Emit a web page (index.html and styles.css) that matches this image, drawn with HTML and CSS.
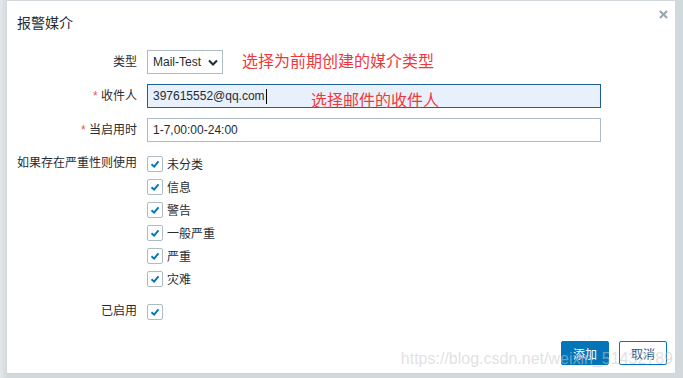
FILE: index.html
```html
<!DOCTYPE html>
<html lang="zh-CN">
<head>
  <meta charset="UTF-8" />
  <meta name="viewport" content="width=device-width, initial-scale=1.0"/>
  <title>报警媒介</title>
  <link rel="stylesheet" href="styles.css">
</head>
<body>
  <div id="dialog">
    <div id="header">
      <h4>报警媒介</h4>
      <svg class="close" viewBox="0 0 10 10"><path d="M1 1L9 9M9 1L1 9"/></svg>
    </div>
    <div id="form">
      <div class="row">
        <label>类型</label>
        <div class="field">
          <div class="select">Mail-Test <svg viewBox="0 0 10 6"><path d="M1 1L5 5L9 1"/></svg></div>
          <span class="note">选择为前期创建的媒介类型</span>
        </div>
      </div>
      <div class="row">
        <label><span class="req">*</span> 收件人</label>
        <div class="input focused">397615552@qq.com<span class="caret"></span>
          <span class="note over">选择邮件的收件人</span>
        </div>
      </div>
      <div class="row">
        <label><span class="req">*</span> 当启用时</label>
        <div class="input">1-7,00:00-24:00</div>
      </div>
      <div class="row top">
        <label>如果存在严重性则使用</label>
        <ul class="checks">
          <li><span class="cb"><svg viewBox="0 0 16 16"><path d="M4 8.2L7 11L12 5"/></svg></span>未分类</li>
          <li><span class="cb"><svg viewBox="0 0 16 16"><path d="M4 8.2L7 11L12 5"/></svg></span>信息</li>
          <li><span class="cb"><svg viewBox="0 0 16 16"><path d="M4 8.2L7 11L12 5"/></svg></span>警告</li>
          <li><span class="cb"><svg viewBox="0 0 16 16"><path d="M4 8.2L7 11L12 5"/></svg></span>一般严重</li>
          <li><span class="cb"><svg viewBox="0 0 16 16"><path d="M4 8.2L7 11L12 5"/></svg></span>严重</li>
          <li><span class="cb"><svg viewBox="0 0 16 16"><path d="M4 8.2L7 11L12 5"/></svg></span>灾难</li>
        </ul>
      </div>
      <div class="row">
        <label>已启用</label>
        <ul class="checks">
          <li><span class="cb"><svg viewBox="0 0 16 16"><path d="M4 8.2L7 11L12 5"/></svg></span></li>
        </ul>
      </div>
    </div>
    <div id="footer">
      <button class="btn">添加</button>
      <button class="btn alt">取消</button>
    </div>
    <div class="watermark">https://blog.csdn.net/weixin_51432789</div>
  </div>
</body>
</html>
```

FILE: styles.css
```css
* {
  box-sizing: border-box;
  margin: 0;
  padding: 0;
}
body {
  font-family: 'Liberation Sans', 'Noto Sans CJK SC', sans-serif;
  font-size: 12px;
  color: #1f2c33;
  background: linear-gradient(90deg, #e4e8ea 0px, #d2d9dc 7px, #d2d9dc 100%);
  height: 378px;
  overflow: hidden;
}
#dialog {
  position: relative;
  margin: 1px 8px 0 7px;
  height: 372px;
  background: #ffffff;
  box-shadow: 0 1px 0 #cdd5d8;
  display: flex;
  flex-direction: column;
}
#header {
  position: relative;
  padding: 13px 10px 0;
}
#header h4 {
  font-size: 14px;
  font-weight: normal;
  line-height: 18px;
}
#header .close {
  position: absolute;
  top: 9px;
  right: 7px;
  width: 9px;
  height: 9px;
  stroke: #9aa7ae;
  stroke-width: 2.4;
}
#form {
  margin-top: 18px;
  padding-left: 10px;
}
.row {
  display: grid;
  grid-template-columns: 120px 454px;
  column-gap: 10px;
  align-items: center;
  margin-bottom: 10px;
}
.row.top {
  align-items: start;
}
.row label {
  text-align: right;
  line-height: 23px;
}
.req {
  color: #e45959;
}
.field {
  display: flex;
  align-items: center;
  gap: 19px;
}
.select {
  width: 76px;
  height: 24px;
  border: 1px solid #acbbc4;
  display: flex;
  align-items: center;
  justify-content: space-between;
  padding: 0 4px 0 5px;
}
.select svg {
  width: 10px;
  height: 7px;
  fill: none;
  stroke: #1f2c33;
  stroke-width: 2;
}
.note {
  color: #f0383c;
  font-size: 16px;
  line-height: 18px;
}
.input {
  position: relative;
  height: 24px;
  border: 1px solid #acbbc4;
  padding: 0 5px;
  line-height: 22px;
  display: flex;
  align-items: center;
}
.input.focused {
  border-color: #1f5f99;
  background: #e8f0fb;
}
.caret {
  display: inline-block;
  width: 1px;
  height: 15px;
  background: #000;
  margin-left: 1px;
}
.note.over {
  position: absolute;
  left: 163px;
  top: 7px;
}
.checks {
  list-style: none;
}
.checks li {
  display: flex;
  align-items: center;
  height: 23px;
  gap: 4px;
}
.cb {
  width: 16px;
  height: 16px;
  border: 1px solid #acbbc4;
  border-radius: 2px;
  display: flex;
}
.cb svg {
  width: 14px;
  height: 14px;
  fill: none;
  stroke: #0275b8;
  stroke-width: 2.2;
}
#footer {
  display: flex;
  justify-content: flex-end;
  gap: 10px;
  padding-right: 8px;
  margin-top: 8px;
}
.btn {
  width: 48px;
  height: 24px;
  font-family: inherit;
  font-size: 12px;
  border: 1px solid #0275b8;
  border-radius: 2px;
  background: #0275b8;
  color: #ffffff;
}
.btn.alt {
  background: #ffffff;
  color: #1b5788;
}
.watermark {
  position: absolute;
  right: 2px;
  bottom: 5px;
  font-size: 16px;
  color: rgba(200, 200, 200, 0.55);
  white-space: nowrap;
}
```
